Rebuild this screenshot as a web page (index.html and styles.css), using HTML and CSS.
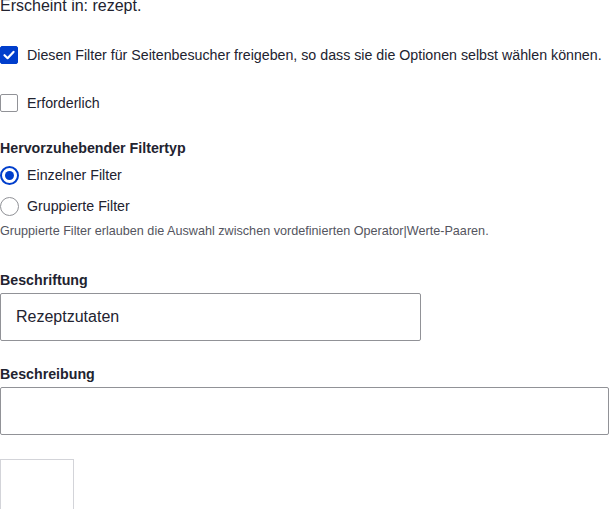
FILE: index.html
```html
<!DOCTYPE html>
<html lang="de">
<head>
<meta charset="utf-8">
<title>Filter</title>
<link rel="stylesheet" href="styles.css">
</head>
<body>
<p class="appears">Erscheint in: rezept.</p>

<div class="check-row first">
  <span class="checkbox checked"><svg viewBox="0 0 18 18" width="18" height="18"><path d="M4.5 9.2 L7.6 12.2 L13.5 5.9" fill="none" stroke="#fff" stroke-width="2.2" stroke-linecap="round" stroke-linejoin="round"/></svg></span>
  <span class="opt-label">Diesen Filter für Seitenbesucher freigeben, so dass sie die Optionen selbst wählen können.</span>
</div>

<div class="check-row second">
  <span class="checkbox"></span>
  <span class="opt-label">Erforderlich</span>
</div>

<div class="group">
  <div class="group-title">Hervorzuhebender Filtertyp</div>
  <div class="radio-row r1">
    <span class="radio checked"><span class="dot"></span></span>
    <span class="opt-label">Einzelner Filter</span>
  </div>
  <div class="radio-row r2">
    <span class="radio"></span>
    <span class="opt-label">Gruppierte Filter</span>
  </div>
  <div class="desc">Gruppierte Filter erlauben die Auswahl zwischen vordefinierten Operator|Werte-Paaren.</div>
</div>

<div class="field f1">
  <div class="field-label">Beschriftung</div>
  <div class="text-input narrow">Rezeptzutaten</div>
</div>

<div class="field f2">
  <div class="field-label">Beschreibung</div>
  <div class="text-input wide"></div>
</div>

<div class="blank-box"></div>
</body>
</html>
```
FILE: styles.css
```css
html, body {
  margin: 0;
  padding: 0;
  background: #fff;
}
body {
  font-family: "Liberation Sans", Arial, sans-serif;
  color: #222330;
  overflow: hidden;
}
.appears {
  margin: -6px 0 0 0;
  font-size: 16px;
  line-height: 24px;
}
.check-row, .radio-row {
  display: flex;
  align-items: center;
  gap: 9px;
  font-size: 14.22px;
  line-height: 18px;
}
.check-row { height: 18px; }
.check-row.first { margin-top: 28px; }
.check-row.second { margin-top: 30px; }
.checkbox {
  box-sizing: border-box;
  width: 18px;
  height: 18px;
  border: 1px solid #919297;
  border-radius: 2px;
  display: flex;
  align-items: center;
  justify-content: center;
  flex: none;
}
.checkbox.checked {
  background: #003ecc;
  border-color: #003ecc;
}
.checkbox svg { display: block; flex: none; }
.opt-label { white-space: nowrap; }
.group { margin-top: 26px; }
.group-title {
  font-size: 14.22px;
  font-weight: bold;
  line-height: 20px;
}
.radio-row { height: 20px; gap: 8px; }
.radio-row.r1 { margin-top: 7px; }
.radio-row.r2 { margin-top: 11px; }
.radio {
  box-sizing: border-box;
  width: 19px;
  height: 19px;
  border: 1px solid #919297;
  border-radius: 50%;
  display: flex;
  align-items: center;
  justify-content: center;
  flex: none;
}
.radio.checked {
  border: 2px solid #003ecc;
}
.radio .dot {
  width: 9px;
  height: 9px;
  border-radius: 50%;
  background: #003ecc;
}
.desc {
  margin-top: 7px;
  font-size: 12.64px;
  line-height: 16px;
  color: #545560;
}
.field-label {
  font-size: 14.22px;
  font-weight: bold;
  line-height: 20px;
}
.field.f1 { margin-top: 31px; }
.field.f2 { margin-top: 23px; }
.text-input {
  box-sizing: border-box;
  margin-top: 3px;
  height: 48px;
  border: 1px solid #919297;
  border-radius: 2px;
  padding: 0 15px;
  font-size: 16px;
  line-height: 46px;
}
.text-input.narrow { width: 421px; }
.text-input.wide { width: 609px; }
.blank-box {
  box-sizing: border-box;
  margin-top: 24px;
  width: 74px;
  height: 60px;
  border: 1px solid #d3d4d9;
}
```
